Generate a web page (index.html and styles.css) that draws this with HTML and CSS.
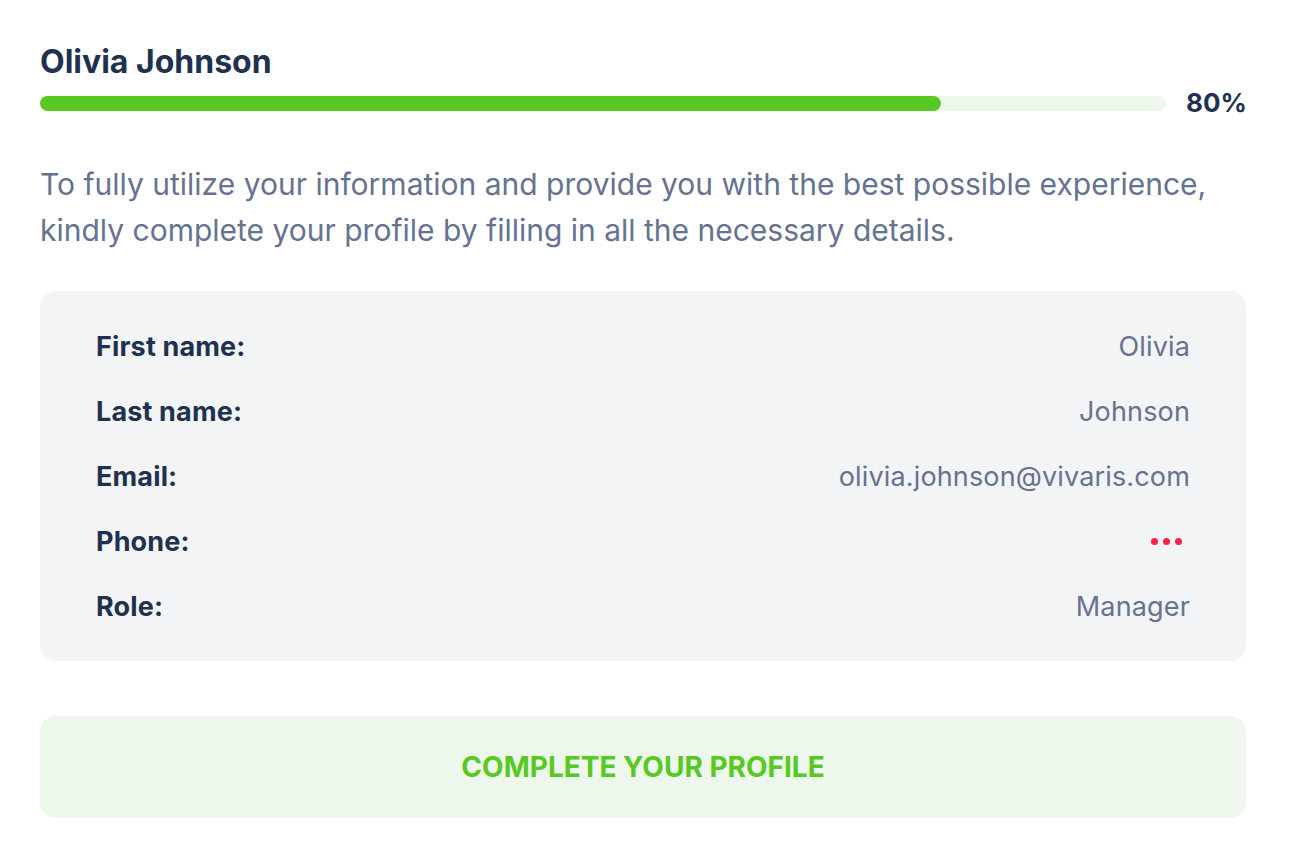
FILE: index.html
```html
<!DOCTYPE html>
<html>

<head>
    <meta charset="UTF-8" />
    <meta name="viewport" content="width=device-width" />
    <title>Profile completion</title>
    <link rel="stylesheet" href="styles.css">
</head>

<body>
    <div class="profile">
        <h1 class="name">Olivia Johnson</h1>

        <div class="progress">
            <div class="track">
                <div class="fill" style="width: 80%"></div>
            </div>
            <span class="percent">80%</span>
        </div>

        <p class="intro">To fully utilize your information and provide you with the best possible experience, kindly complete your profile by filling in all the necessary details.</p>

        <div class="details">
            <div class="row">
                <span class="label">First name:</span>
                <span class="value">Olivia</span>
            </div>
            <div class="row">
                <span class="label">Last name:</span>
                <span class="value">Johnson</span>
            </div>
            <div class="row">
                <span class="label">Email:</span>
                <span class="value">olivia.johnson@vivaris.com</span>
            </div>
            <div class="row">
                <span class="label">Phone:</span>
                <span class="missing"><i></i><i></i><i></i></span>
            </div>
            <div class="row">
                <span class="label">Role:</span>
                <span class="value">Manager</span>
            </div>
        </div>

        <button class="complete">Complete your profile</button>
    </div>
</body>

</html>
```

FILE: styles.css
```css
body {
    margin: 0;
    font-family: Inter, "Noto Sans", sans-serif;
    background: #ffffff;
    color: #1f3050;
}

.profile {
    padding: 42px 44px 40px 40px;
}

.name {
    margin: 0;
    font-size: 32px;
    line-height: 40px;
    font-weight: 700;
}

.progress {
    display: flex;
    align-items: center;
    gap: 20px;
    margin-top: 6px;
}

.track {
    flex: 1;
    height: 15px;
    border-radius: 8px;
    background: #eef7ec;
}

.fill {
    height: 100%;
    border-radius: 8px;
    background: #58c923;
}

.percent {
    font-size: 26px;
    line-height: 30px;
    font-weight: 700;
    width: 60px;
}

.intro {
    margin: 43px 0 0;
    font-size: 30px;
    line-height: 46px;
    color: #657291;
}

.details {
    margin-top: 38px;
    padding: 22.5px 56px;
    background: #f3f4f6;
    border-radius: 16px;
}

.row {
    display: flex;
    justify-content: space-between;
    align-items: center;
    height: 65px;
    font-size: 27px;
    letter-spacing: 0.15px;
}

.label {
    font-weight: 700;
}

.value {
    color: #657291;
}

.missing {
    display: flex;
    gap: 5px;
    padding-right: 8px;
}

.missing i {
    width: 7px;
    height: 7px;
    border-radius: 50%;
    background: #ff1f4b;
}

.complete {
    display: block;
    width: 100%;
    margin-top: 55px;
    height: 102px;
    border: none;
    border-radius: 16px;
    background: #edf7ec;
    color: #58c923;
    font-family: inherit;
    font-size: 28px;
    font-weight: 700;
    text-transform: uppercase;
    cursor: pointer;
}
```
